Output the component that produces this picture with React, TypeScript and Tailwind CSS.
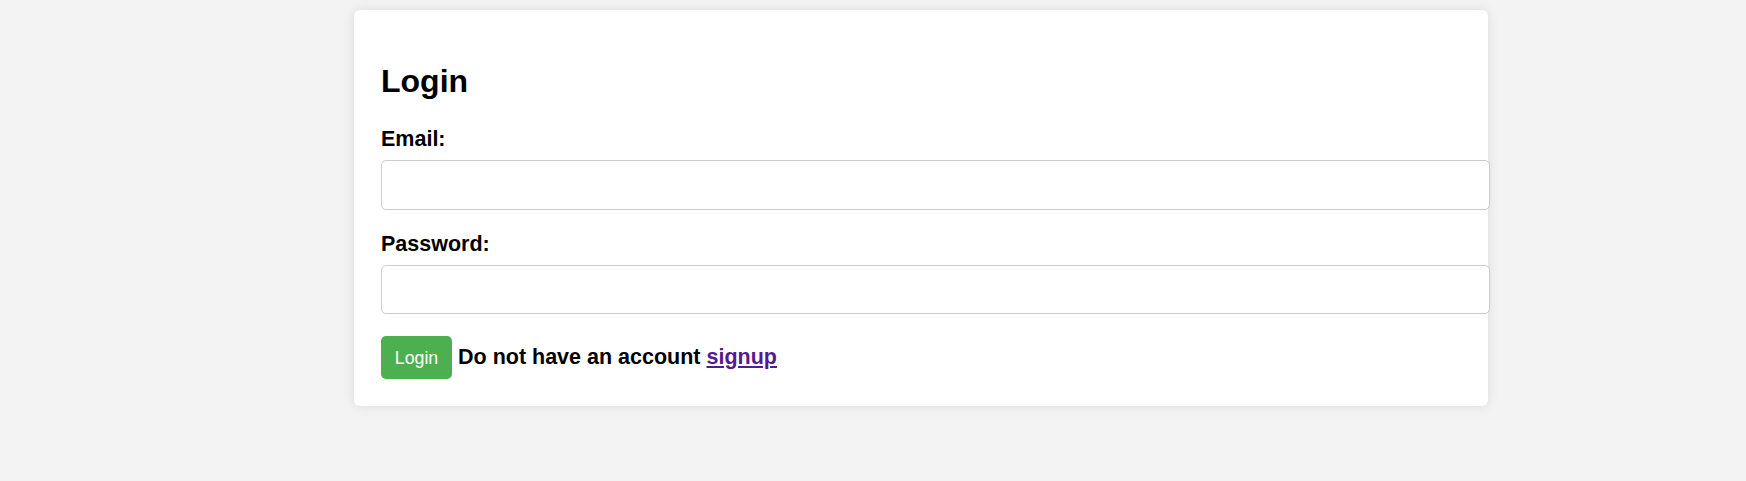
import React from "react";

export default function App() {
  return (
    <div
      className="min-h-screen bg-[#f3f3f3] pt-[10px]"
      style={{ fontFamily: '"Liberation Sans", Arial, sans-serif' }}
    >
      <div className="ml-[354px] w-[1134px] rounded-[6px] bg-white px-[27px] pt-[53px] pb-[27px] shadow-[0_0_12px_rgba(0,0,0,0.1)]">
        <h1 className="mb-[27px] text-[32px] font-bold leading-[37px] text-black">Login</h1>
        <label className="mb-[8.5px] block text-[21.5px] font-bold leading-[24.5px] text-black">
          Email:
        </label>
        <input
          type="email"
          className="mb-[22px] block h-[49.5px] w-[1109px] rounded-[5px] border border-[#cccccc] bg-white px-[13px] outline-none"
        />
        <label className="mb-[8.5px] block text-[21.5px] font-bold leading-[24.5px] text-black">
          Password:
        </label>
        <input
          type="password"
          className="mb-[22px] block h-[49.5px] w-[1109px] rounded-[5px] border border-[#cccccc] bg-white px-[13px] outline-none"
        />
        <div className="flex items-baseline">
          <button className="flex h-[43px] w-[71px] items-center justify-center rounded-[5px] bg-[#4caf50] text-[17.78px] leading-[20px] text-white">
            Login
          </button>
          <span className="ml-[6px] text-[21.5px] font-bold leading-[24.5px] text-black">
            Do not have an account{" "}
            <a href="#" className="text-[#551a8b] underline">
              signup
            </a>
          </span>
        </div>
      </div>
    </div>
  );
}
